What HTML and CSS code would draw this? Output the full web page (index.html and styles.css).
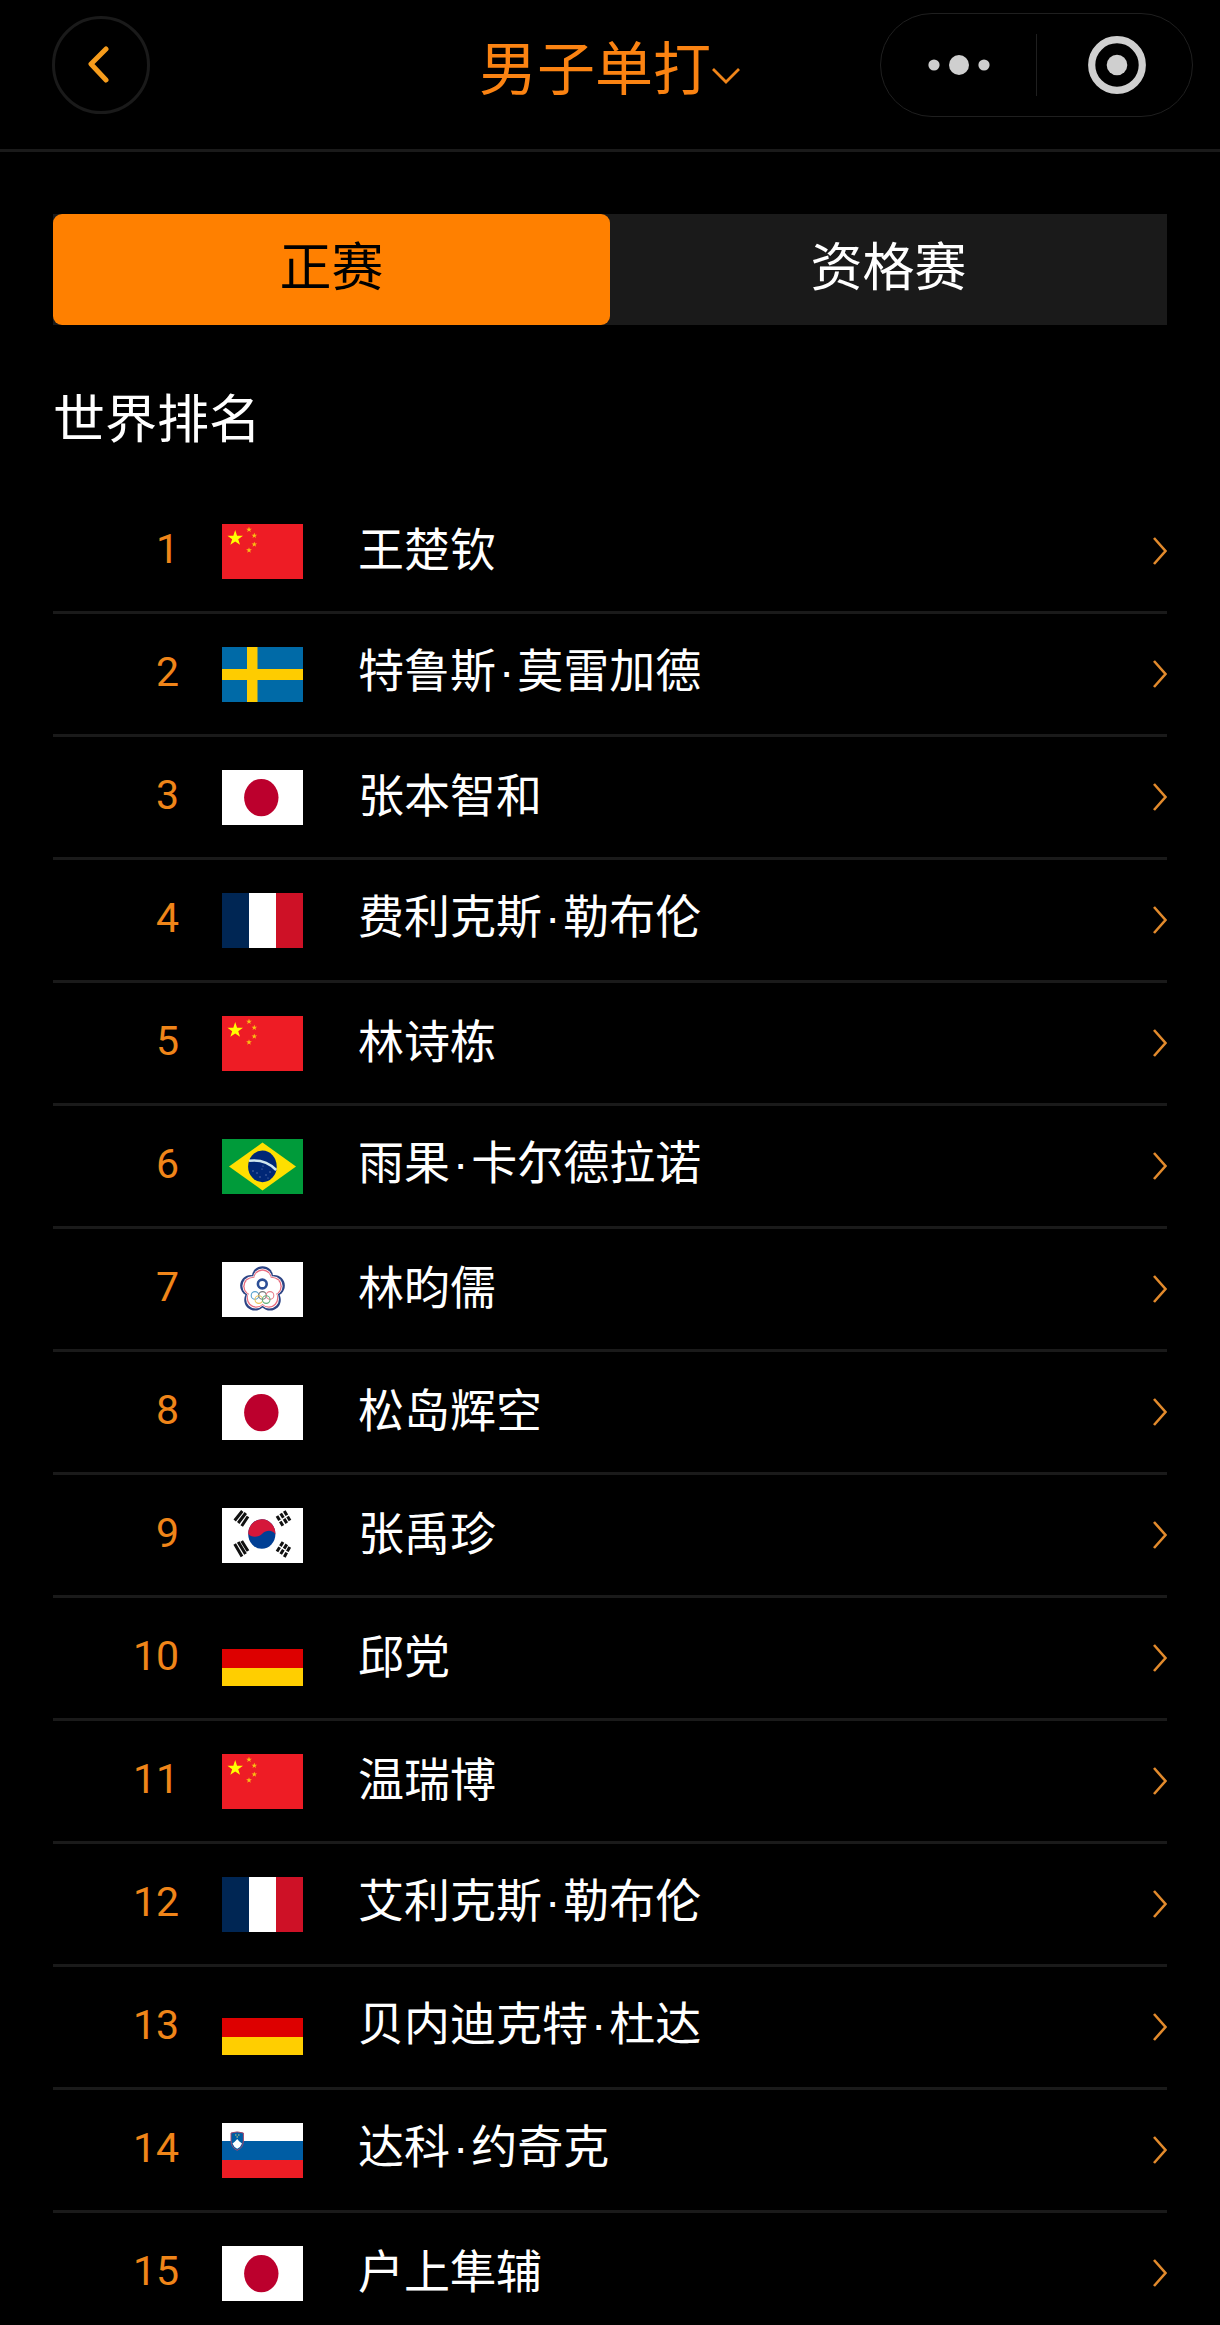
FILE: index.html
```html
<!DOCTYPE html>
<html lang="zh-CN">
<head>
  <meta charset="UTF-8" />
  <meta name="viewport" content="width=device-width, initial-scale=1.0"/>
  <title>男子单打</title>
  <link rel="stylesheet" href="styles.css">
</head>
<body>
  <!-- flags and arrows shared by the rows -->
  <svg class="sprite" aria-hidden="true">
    <symbol id="arrow" viewBox="0 0 14 28">
      <path d="M1 1 L12.500 14 L1 27" fill="none" stroke="#e28a2c" stroke-width="2.6"/>
    </symbol>
    <symbol id="star" viewBox="-10 -10 20 20">
      <path d="M0-10 2.3-3.1 9.5-3.1 3.7 1.2 5.9 8.1 0 3.9-5.9 8.1-3.7 1.2-9.5-3.1-2.3-3.1Z"/>
    </symbol>
    <symbol id="cn" viewBox="0 0 81 55">
      <rect width="81" height="55" fill="#ee1c25"/>
      <use href="#star" x="5" y="6" width="16.4" height="16.4" fill="#ffff00"/>
      <g fill="#f9c013">
        <use href="#star" x="24" y="2.6" width="6" height="6"/>
        <use href="#star" x="29.3" y="8.6" width="6" height="6"/>
        <use href="#star" x="29.3" y="17.4" width="6" height="6"/>
        <use href="#star" x="24" y="23.3" width="6" height="6"/>
      </g>
    </symbol>
    <symbol id="se" viewBox="0 0 81 55">
      <rect width="81" height="55" fill="#006aa7"/>
      <path d="M25 0h10.5v55H25zM0 22h81v11H0z" fill="#fecc00"/>
    </symbol>
    <symbol id="jp" viewBox="0 0 81 55">
      <rect width="81" height="55" fill="#fff"/>
      <ellipse cx="39.3" cy="27.6" rx="17.2" ry="18.7" fill="#bc002d"/>
    </symbol>
    <symbol id="fr" viewBox="0 0 81 55">
      <rect width="81" height="55" fill="#fff"/>
      <rect width="27" height="55" fill="#002654"/>
      <rect x="54" width="27" height="55" fill="#ce1126"/>
    </symbol>
    <symbol id="br" viewBox="0 0 81 55">
      <rect width="81" height="55" fill="#009b3a"/>
      <path d="M7 27.4 40.5 3.6 74 27.4 40.5 51.4Z" fill="#fedf00"/>
      <ellipse cx="40.4" cy="27.4" rx="14.3" ry="15.8" fill="#002776"/>
      <path d="M27 21.8C37 20.5 47 23.5 54.2 31" fill="none" stroke="#cfe6ee" stroke-width="2.6"/>
      <g fill="#6c84b8">
        <circle cx="31" cy="32" r=".7"/><circle cx="35" cy="34" r=".7"/><circle cx="40" cy="30" r=".6"/>
        <circle cx="38" cy="38" r=".7"/><circle cx="44" cy="36" r=".7"/><circle cx="48" cy="33" r=".7"/>
        <circle cx="41" cy="27" r=".6"/><circle cx="46" cy="39" r=".6"/>
      </g>
    </symbol>
    <symbol id="plum" viewBox="-25 -25 50 50">
      <circle cy="-12.400" r="10.500"/><circle cx="11.400" cy="-3.800" r="10.500"/><circle cx="7.400" cy="10.200" r="10.500"/>
      <circle cx="-7.400" cy="10.200" r="10.500"/><circle cx="-11.400" cy="-3.800" r="10.500"/><circle r="12"/>
    </symbol>
    <symbol id="tpe" viewBox="0 0 81 55">
      <rect width="81" height="55" fill="#fff"/>
      <use href="#plum" x="15" y="2" width="51" height="51" fill="#2c4384"/>
      <use href="#plum" x="17.500" y="4.500" width="46" height="46" fill="#fff"/>
      <use href="#plum" x="18.500" y="5.500" width="44" height="44" fill="#e8697c"/>
      <use href="#plum" x="20" y="7" width="41" height="41" fill="#fff"/>
      <circle cx="40.300" cy="22" r="4.400" fill="none" stroke="#2c4f96" stroke-width="2.600"/>
      <g fill="none" stroke-width="1.100">
        <circle cx="33" cy="33.400" r="3.800" stroke="#5aa2cf"/><circle cx="40.500" cy="33.400" r="3.800" stroke="#777"/>
        <circle cx="48" cy="33.400" r="3.800" stroke="#e8808c"/><circle cx="36.800" cy="37.600" r="3.800" stroke="#ecc45c"/>
        <circle cx="44.200" cy="37.600" r="3.800" stroke="#62b07c"/>
      </g>
    </symbol>
    <symbol id="kr" viewBox="0 0 81 55">
      <rect width="81" height="55" fill="#fff"/>
      <ellipse cx="39.800" cy="26" rx="13.600" ry="14.800" fill="#003f95"/>
      <path d="M26.200 25.500A13.600 14.800 0 0 1 53.400 26.500C51 22 44.500 21.500 40.500 25.500 36.500 29.800 29 30 26.200 25.500Z" fill="#d5173a"/>
      <g fill="none" stroke="#111" stroke-width="3">
        <path d="M12.700 12.500 20.300 3M16.200 15 23.800 5M19.700 18 26 8.500"/>
        <path d="M12.700 36 20 48.500M16.200 34 23.500 46M19.700 33 26 43" stroke-dasharray="20"/>
        <path d="M55 8 61 18M58.700 5.500 65 15.500M62.300 3 68 12.500" stroke-dasharray="5 1.400"/>
        <path d="M55 43.500 61 34M58.700 46 65 36M62.300 49 68 38.500" stroke-dasharray="5 1.400"/>
      </g>
    </symbol>
    <symbol id="de" viewBox="0 0 81 55">
      <rect width="81" height="55" fill="#000"/>
      <rect y="18" width="81" height="19" fill="#dd0000"/>
      <rect y="37" width="81" height="18" fill="#ffce00"/>
    </symbol>
    <symbol id="si" viewBox="0 0 81 55">
      <rect width="81" height="55" fill="#fff"/>
      <rect y="18" width="81" height="19" fill="#005da4"/>
      <rect y="37" width="81" height="18" fill="#ed1c24"/>
      <path d="M9 10Q15.200 7.800 21.400 10V18Q21 25 15.200 27.300 9.400 25 9 18Z" fill="#005da4" stroke="#a0486e" stroke-width="1"/>
      <path d="M10.500 20.500 13 18.500 15.200 16 17.400 18.500 20 20.500Q18.500 24.500 15.200 25.800 12 24.500 10.500 20.500Z" fill="#fff"/>
      <path d="M13 12h1.500M16 12h1.500M14.500 14h1.500" stroke="#d8d070" stroke-width="1"/>
    </symbol>
  </svg>

  <div class="app">
    <header class="topbar">
      <button class="back" type="button" aria-label="返回">
        <svg width="30" height="38" viewBox="0 0 30 38" aria-hidden="true">
          <path d="M20 3 L5 18 L20 34" fill="none" stroke="#f69c1c" stroke-width="5" stroke-linecap="round" stroke-linejoin="round"/>
        </svg>
      </button>
      <h1 class="title">
        <button class="title-btn" type="button">男子单打<svg width="30" height="18" viewBox="0 0 30 18" aria-hidden="true"><path d="M2 2 L15 15 L28 2" fill="none" stroke="#f08519" stroke-width="2.8"/></svg></button>
      </h1>
      <div class="capsule">
        <button type="button" aria-label="更多">
          <svg width="64" height="24" viewBox="0 0 64 24" fill="#cfcfcf" aria-hidden="true">
            <circle cx="7" cy="12" r="5.600"/><circle cx="32" cy="12" r="10"/><circle cx="57" cy="12" r="5.600"/>
          </svg>
        </button>
        <button type="button" aria-label="关闭">
          <svg width="64" height="60" viewBox="0 0 64 60" aria-hidden="true">
            <circle cx="34" cy="30" r="25.300" fill="none" stroke="#cfcfcf" stroke-width="7.200"/>
            <circle cx="34" cy="30" r="10.300" fill="#cfcfcf"/>
          </svg>
        </button>
      </div>
    </header>

    <main class="content">
      <div class="tabs" role="tablist">
        <button class="tab active" type="button" role="tab" aria-selected="true">正赛</button>
        <button class="tab" type="button" role="tab" aria-selected="false">资格赛</button>
      </div>

      <h2 class="heading">世界排名</h2>

      <ol class="ranking">
        <li><a class="row" href="#"><span class="rank">1</span><svg class="flag"><use href="#cn"/></svg><span class="name">王楚钦</span><svg class="arrow"><use href="#arrow"/></svg></a></li>
        <li><a class="row" href="#"><span class="rank">2</span><svg class="flag"><use href="#se"/></svg><span class="name">特鲁斯<span class="dot">·</span>莫雷加德</span><svg class="arrow"><use href="#arrow"/></svg></a></li>
        <li><a class="row" href="#"><span class="rank">3</span><svg class="flag"><use href="#jp"/></svg><span class="name">张本智和</span><svg class="arrow"><use href="#arrow"/></svg></a></li>
        <li><a class="row" href="#"><span class="rank">4</span><svg class="flag"><use href="#fr"/></svg><span class="name">费利克斯<span class="dot">·</span>勒布伦</span><svg class="arrow"><use href="#arrow"/></svg></a></li>
        <li><a class="row" href="#"><span class="rank">5</span><svg class="flag"><use href="#cn"/></svg><span class="name">林诗栋</span><svg class="arrow"><use href="#arrow"/></svg></a></li>
        <li><a class="row" href="#"><span class="rank">6</span><svg class="flag"><use href="#br"/></svg><span class="name">雨果<span class="dot">·</span>卡尔德拉诺</span><svg class="arrow"><use href="#arrow"/></svg></a></li>
        <li><a class="row" href="#"><span class="rank">7</span><svg class="flag"><use href="#tpe"/></svg><span class="name">林昀儒</span><svg class="arrow"><use href="#arrow"/></svg></a></li>
        <li><a class="row" href="#"><span class="rank">8</span><svg class="flag"><use href="#jp"/></svg><span class="name">松岛辉空</span><svg class="arrow"><use href="#arrow"/></svg></a></li>
        <li><a class="row" href="#"><span class="rank">9</span><svg class="flag"><use href="#kr"/></svg><span class="name">张禹珍</span><svg class="arrow"><use href="#arrow"/></svg></a></li>
        <li><a class="row" href="#"><span class="rank">10</span><svg class="flag"><use href="#de"/></svg><span class="name">邱党</span><svg class="arrow"><use href="#arrow"/></svg></a></li>
        <li><a class="row" href="#"><span class="rank">11</span><svg class="flag"><use href="#cn"/></svg><span class="name">温瑞博</span><svg class="arrow"><use href="#arrow"/></svg></a></li>
        <li><a class="row" href="#"><span class="rank">12</span><svg class="flag"><use href="#fr"/></svg><span class="name">艾利克斯<span class="dot">·</span>勒布伦</span><svg class="arrow"><use href="#arrow"/></svg></a></li>
        <li><a class="row" href="#"><span class="rank">13</span><svg class="flag"><use href="#de"/></svg><span class="name">贝内迪克特<span class="dot">·</span>杜达</span><svg class="arrow"><use href="#arrow"/></svg></a></li>
        <li><a class="row" href="#"><span class="rank">14</span><svg class="flag"><use href="#si"/></svg><span class="name">达科<span class="dot">·</span>约奇克</span><svg class="arrow"><use href="#arrow"/></svg></a></li>
        <li><a class="row" href="#"><span class="rank">15</span><svg class="flag"><use href="#jp"/></svg><span class="name">户上隼辅</span><svg class="arrow"><use href="#arrow"/></svg></a></li>
      </ol>
    </main>
  </div>
</body>
</html>
```

FILE: styles.css
```css
* {
  box-sizing: border-box;
}

body {
  margin: 0;
  background: #000;
  color: #fff;
  font-family: "Noto Sans CJK SC", sans-serif;
}

button {
  padding: 0;
  border: none;
  background: none;
  color: inherit;
  font: inherit;
}

svg {
  display: block;
}

.sprite {
  position: absolute;
  width: 0;
  height: 0;
}

.app {
  height: 100vh;
  overflow-y: auto;
  scrollbar-width: none;
}

.topbar {
  display: grid;
  grid-template-columns: 1fr auto 1fr;
  align-items: center;
  height: 152px;
  padding: 0 27px 20px 52px;
  border-bottom: 3px solid #1a1a1a;
}

.back {
  display: flex;
  align-items: center;
  justify-content: center;
  width: 98px;
  height: 98px;
  border: 3px solid #1a1a1a;
  border-radius: 50%;
}

.title {
  margin: 0 0 0 -25px;
  font-size: 58px;
  font-weight: 400;
  line-height: 80px;
  color: #fb8312;
}

.title-btn {
  display: flex;
  align-items: center;
}

.title-btn svg {
  margin-top: 22px;
}

.capsule {
  display: flex;
  align-items: center;
  justify-self: end;
  width: 313px;
  height: 104px;
  border: 1px solid #1f1f1f;
  border-radius: 52px;
}

.capsule button {
  display: flex;
  flex: 1;
  align-items: center;
  justify-content: center;
  height: 62px;
}

.capsule button + button {
  border-left: 1px solid #1f1f1f;
}

.content {
  padding: 62px 53px 0;
}

.tabs {
  display: flex;
  background: #1a1a1a;
}

.tab {
  flex: 1;
  height: 111px;
  padding-bottom: 12px;
  border-radius: 9px;
  font-size: 52px;
  line-height: 72px;
}

.tab.active {
  background: #ff8000;
  color: #000;
}

.heading {
  margin: 55px 0 39px;
  font-size: 52px;
  font-weight: 400;
  line-height: 72px;
}

.ranking {
  margin: 0;
  padding: 0;
  list-style: none;
}

.row {
  display: flex;
  align-items: center;
  height: 123px;
  border-bottom: 3px solid #1a1a1a;
  color: #fff;
  text-decoration: none;
}

.rank {
  width: 126px;
  padding-bottom: 4px;
  font-family: Roboto, sans-serif;
  font-size: 41px;
  text-align: right;
  color: #f08519;
}

.flag {
  width: 81px;
  height: 55px;
  margin: 0 55px 0 43px;
}

.name {
  flex: 1;
  padding-bottom: 10px;
  font-size: 46px;
  line-height: 60px;
}

.dot {
  padding: 0 3px;
  font-family: "Liberation Sans", sans-serif;
}

.arrow {
  width: 14px;
  height: 28px;
}
```
